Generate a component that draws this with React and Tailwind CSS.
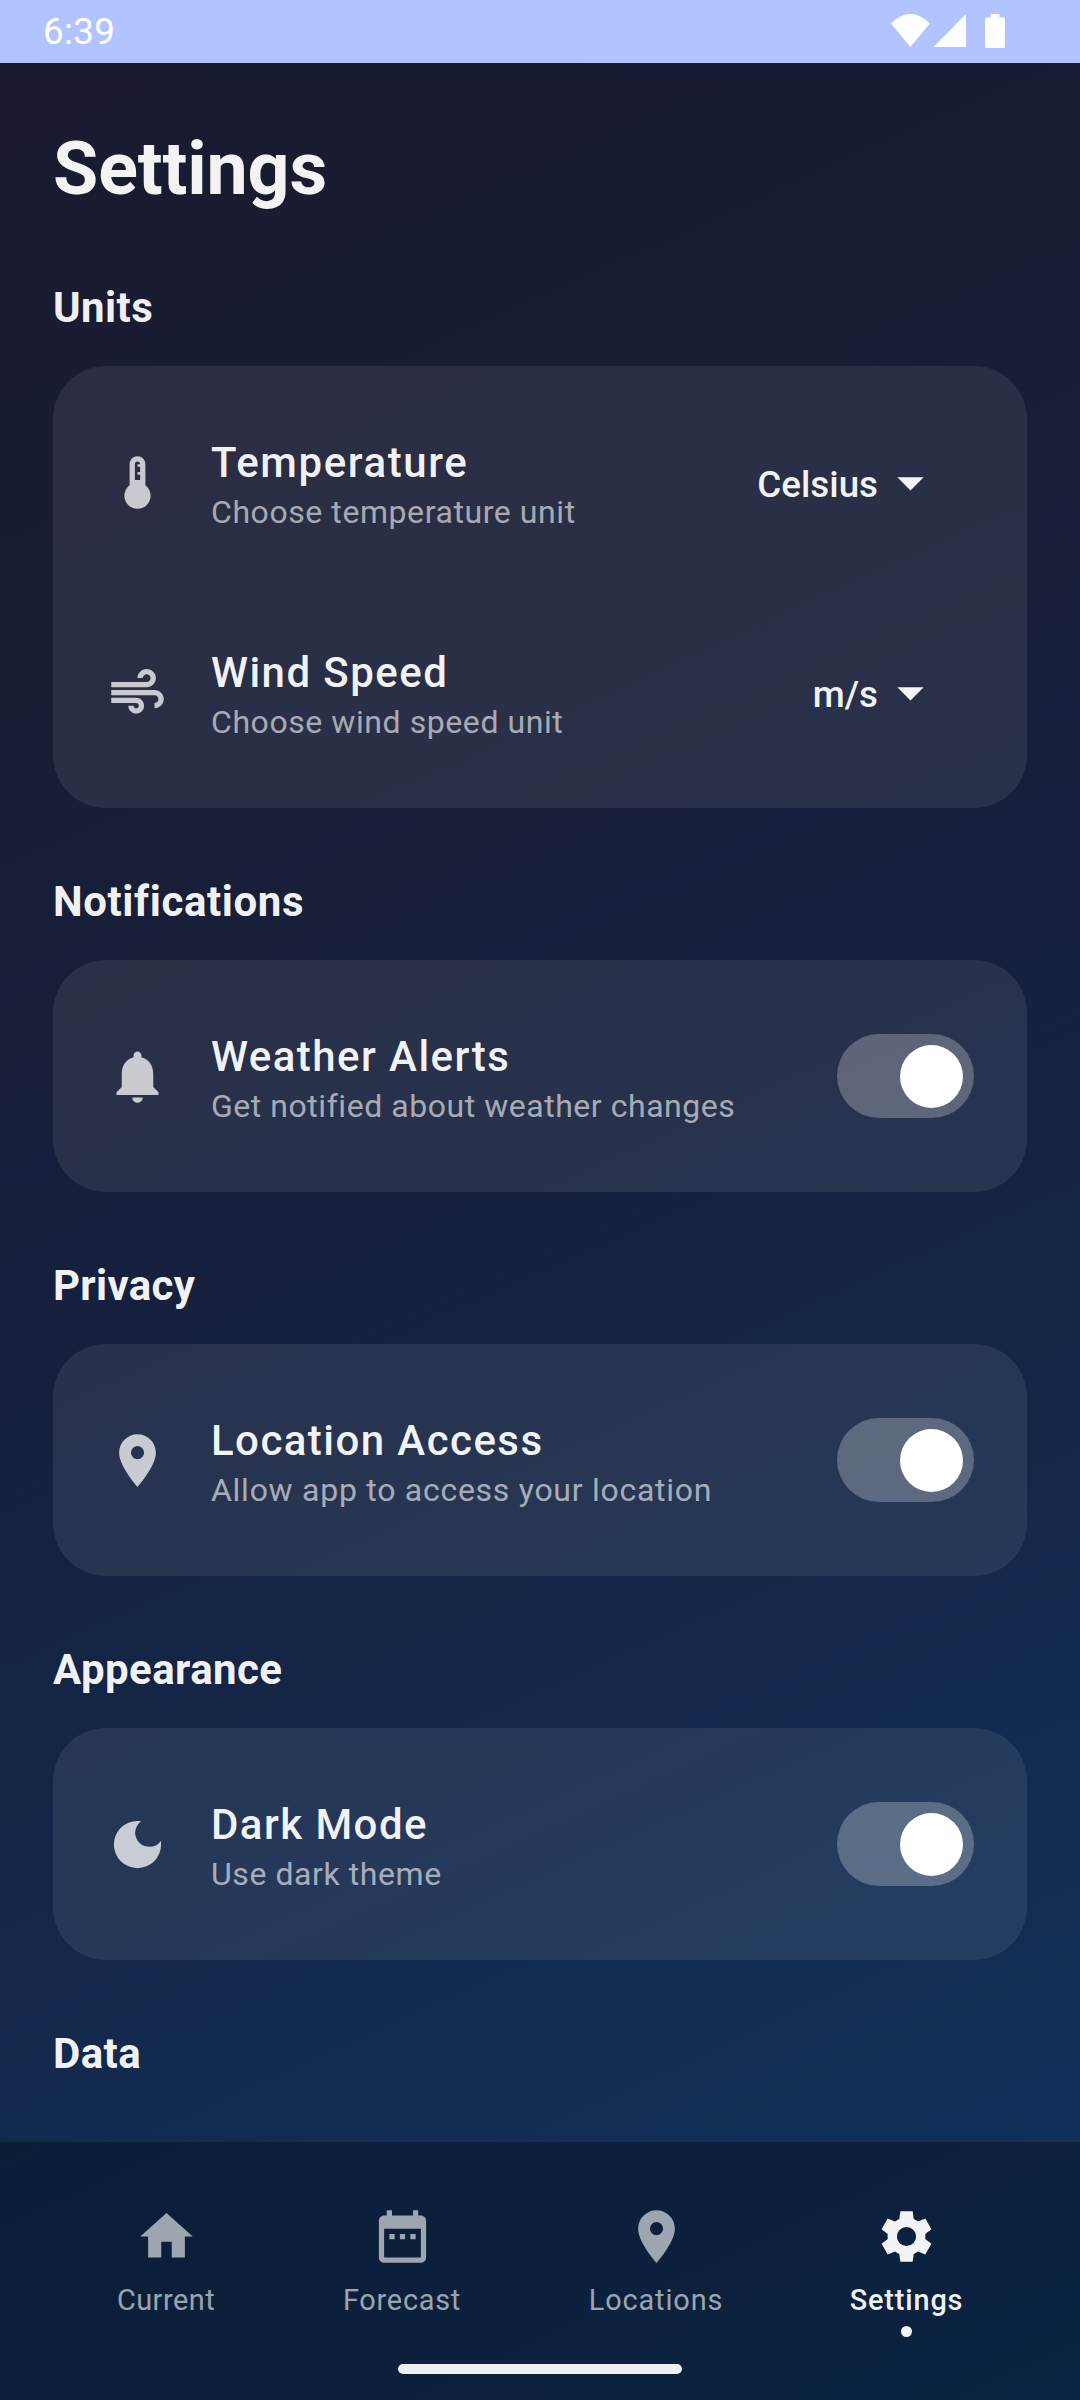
import React from "react";
import {
  MdDeviceThermostat, MdAir, MdNotifications, MdLocationOn, MdDarkMode,
  MdHome, MdDateRange,
} from "react-icons/md";

function GearIcon({ className }) {
  return (
    <svg viewBox="-0.5 -0.5 25 25" fill="currentColor" fillRule="evenodd" className={className}>
      <path d="M19.43 13.01c.04-.33.08-.67.08-1.01 0-.34-.03-.66-.07-.99l2.45-1.9-2.43-4.22-2.87 1.16c-.52-.4-1.09-.74-1.71-1L14.44 2H9.57l-.44 3.07c-.61.26-1.18.6-1.7 1L4.55 4.89 2.11 9.11l2.44 1.92c-.04.32-.06.63-.06.97 0 .34.03.68.08 1.01l-2.45 1.89 2.43 4.2 2.88-1.15c.5.37 1.07.71 1.7.97L9.58 22h4.85l.44-3.08c.61-.26 1.19-.6 1.71-.97l2.88 1.15 2.43-4.2zM12 15.8a3.8 3.8 0 1 1 0-7.6 3.8 3.8 0 0 1 0 7.6z" />
    </svg>
  );
}

function StatusBar() {
  return (
    <header className="flex h-[63px] shrink-0 items-center justify-between bg-[#b2c4ff] pl-[43px] pr-[75px] text-white">
      <span className="text-[36.75px] leading-[43px] tracking-[0.33px]">6:39</span>
      <svg width="114" height="34" viewBox="0 0 114 34" fill="currentColor" className="mt-[-1px]">
        <path d="M0 9.5Q9 0 19.4 0T38.8 9.5L19.4 33z" />
        <path d="M75 0V33H42.5z" />
        <path d="M99.5 0h9v3.5h3.7a2 2 0 0 1 2 2V32a2 2 0 0 1-2 2H96a2 2 0 0 1-2-2V5.5a2 2 0 0 1 2-2h3.5z" />
      </svg>
    </header>
  );
}

function Toggle() {
  return (
    <button role="switch" aria-checked="true" className="flex h-[84px] w-[137px] items-center justify-end rounded-full bg-white/25 pr-[11px]">
      <span className="size-[63px] rounded-full bg-white" />
    </button>
  );
}

function Dropdown({ value }) {
  return (
    <button className="mr-[32px] flex items-center font-medium text-[36.75px] leading-[43px]">
      <span className="pr-px pt-[5px]">{value}</span>
      <svg width="63" height="63" viewBox="0 0 24 24" fill="currentColor"><path d="M7 10l5 5 5-5z" /></svg>
    </button>
  );
}

function Row({ icon: Icon, title, text, titleClass = "tracking-[1.44px]", textClass = "tracking-[0.57px]", children }) {
  return (
    <div className="flex h-[210px] items-center px-[53px]">
      <Icon className="size-[63px] shrink-0 text-white/75" />
      <div className="ml-[42px] grow pt-[9px]">
        <div className={`text-[42px] font-medium leading-[50px] ${titleClass}`}>{title}</div>
        <div className={`text-[32px] leading-[48px] text-white/60 ${textClass}`}>{text}</div>
      </div>
      {children}
    </div>
  );
}

function Section({ title, titleClass = "tracking-[0.42px]", children }) {
  return (
    <section className="mb-[69px]">
      <h2 className={`text-[42px] font-bold leading-[50px] ${titleClass}`}>{title}</h2>
      {children && <div className="mt-[33px] rounded-[53px] bg-white/[0.08] py-[11px]">{children}</div>}
    </section>
  );
}

function NavItem({ icon: Icon, label, active, className }) {
  return (
    <button className={`flex flex-col items-center ${active ? "font-medium text-white/95" : "text-white/60"} ${className}`}>
      <Icon className="size-[63px]" />
      <span className="mt-[15px] text-[28.875px] leading-[34px]">{label}</span>
      {active && <span className="mt-[9px] size-[11px] rounded-full bg-white/95" />}
    </button>
  );
}

export default function App() {
  return (
    <div className="flex h-[2400px] w-[1080px] flex-col overflow-hidden bg-[linear-gradient(155.77deg,#1a1a2e_0%,#16213e_50%,#0f3460_100%)] font-[Roboto,sans-serif] text-white/95">
      <StatusBar />
      <main className="h-[2079px] shrink-0 overflow-hidden px-[53px] pt-[63px]">
        <h1 className="text-[73.5px] font-bold leading-[86px] tracking-[-0.12px]">Settings</h1>
        <div className="mt-[71px]">
          <Section title="Units">
            <Row icon={MdDeviceThermostat} title="Temperature" text="Choose temperature unit" titleClass="tracking-[1.6px]">
              <Dropdown value="Celsius" />
            </Row>
            <Row icon={MdAir} title="Wind Speed" text="Choose wind speed unit">
              <Dropdown value="m/s" />
            </Row>
          </Section>
          <Section title="Notifications" titleClass="tracking-[0.6px]">
            <Row icon={MdNotifications} title="Weather Alerts" text="Get notified about weather changes" textClass="tracking-[0.54px]"><Toggle /></Row>
          </Section>
          <Section title="Privacy" titleClass="tracking-[0.3px]">
            <Row icon={MdLocationOn} title="Location Access" text="Allow app to access your location" textClass="tracking-[0.73px]"><Toggle /></Row>
          </Section>
          <Section title="Appearance">
            <Row icon={MdDarkMode} title="Dark Mode" text="Use dark theme"><Toggle /></Row>
          </Section>
          <Section title="Data" />
        </div>
      </main>
      <nav className="flex grow flex-col items-center bg-black/30 pt-[63px]">
        <div className="flex h-[159px] w-full items-start pl-[48px]">
          <NavItem icon={MdHome} label="Current" className="w-[236px] tracking-[0.5px]" />
          <NavItem icon={MdDateRange} label="Forecast" className="w-[236px] tracking-[0.76px]" />
          <NavItem icon={MdLocationOn} label="Locations" className="w-[272px] tracking-[0.88px]" />
          <NavItem icon={GearIcon} label="Settings" active className="w-[229px] tracking-[0.86px]" />
        </div>
        <div className="h-[10px] w-[284px] rounded-full bg-[#eeeff1]" />
      </nav>
    </div>
  );
}
